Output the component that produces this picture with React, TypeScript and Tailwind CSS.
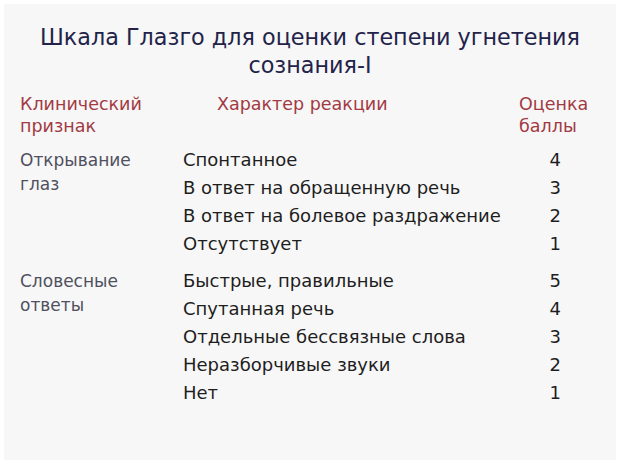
import React from 'react';

type Group = { sign: string[]; rows: [string, number][] };

const groups: Group[] = [
  {
    sign: ['Открывание', 'глаз'],
    rows: [
      ['Спонтанное', 4],
      ['В ответ на обращенную речь', 3],
      ['В ответ на болевое раздражение', 2],
      ['Отсутствует', 1],
    ],
  },
  {
    sign: ['Словесные', 'ответы'],
    rows: [
      ['Быстрые, правильные', 5],
      ['Спутанная речь', 4],
      ['Отдельные бессвязные слова', 3],
      ['Неразборчивые звуки', 2],
      ['Нет', 1],
    ],
  },
];

export default function App() {
  return (
    <div className="w-[620px] h-[464px] bg-white p-[4px] font-['DejaVu_Sans','Liberation_Sans',sans-serif]">
      <div className="h-full bg-[#f7f7f7] pt-[19px]">
        <h1 className="text-center text-[22.3px] leading-[28px] text-[#23234a]">
          Шкала Глазго для оценки степени угнетения
          <br />
          сознания-I
        </h1>

        <div className="mt-[14px] flex text-[17.5px] leading-[22px] text-[#a23a44]">
          <div className="w-[179px] pl-[16px]">
            Клинический
            <br />
            признак
          </div>
          <div className="w-[336px] pl-[34px]">Характер реакции</div>
          <div>
            Оценка
            <br />
            баллы
          </div>
        </div>

        <div className="mt-[8px] flex flex-col gap-[9px]">
          {groups.map((g) => (
            <div key={g.sign[0]} className="flex">
              <div className="w-[179px] pl-[16px] pt-[3px] text-[17px] leading-[24px] text-[#505060]">
                {g.sign[0]}
                <br />
                {g.sign[1]}
              </div>
              <div className="flex flex-col">
                {g.rows.map(([label, score]) => (
                  <div key={label} className="flex h-[28px] items-center text-[18px] text-[#1e1e1e]">
                    <span className="w-[363px]">{label}</span>
                    <span className="w-[15px] text-right">{score}</span>
                  </div>
                ))}
              </div>
            </div>
          ))}
        </div>
      </div>
    </div>
  );
}
